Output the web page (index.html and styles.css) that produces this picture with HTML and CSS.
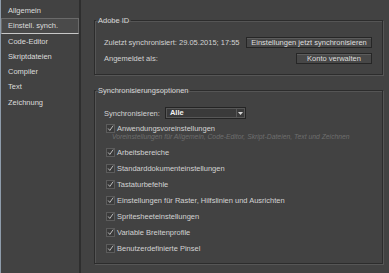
FILE: index.html
```html
<!DOCTYPE html>
<html lang="de">
  <head>
    <meta charset="UTF-8" />
    <title>Voreinstellungen</title>
    <link rel="stylesheet" href="styles.css">
  </head>
  <body>
    <div class="window">
      <div class="sidebar">
        <div class="item">Allgemein</div>
        <div class="item active">Einstell. synch.</div>
        <div class="item">Code-Editor</div>
        <div class="item">Skriptdateien</div>
        <div class="item">Compiler</div>
        <div class="item">Text</div>
        <div class="item">Zeichnung</div>
      </div>
      <div class="divider"></div>

      <div class="contents">
        <fieldset class="group">
          <legend>Adobe ID</legend>
          <div class="id-rows">
            <div class="row">
              <span>Zuletzt synchronisiert: 29.05.2015; 17:55</span>
              <button class="btn wide">Einstellungen jetzt synchronisieren</button>
            </div>
            <div class="row">
              <span>Angemeldet als:</span>
              <button class="btn narrow">Konto verwalten</button>
            </div>
          </div>
        </fieldset>

        <fieldset class="group options">
          <legend>Synchronisierungsoptionen</legend>
          <div class="sync-line">
            <span class="label">Synchronisieren:</span>
            <div class="select">
              <span class="value">Alle</span>
              <span class="arrow">
                <svg width="5" height="3" viewBox="0 0 5 3"><path d="M0 0H5L2.5 3Z" fill="#d8d8d8"/></svg>
              </span>
            </div>
          </div>
          <div class="checks">
            <div class="check">
              <span class="box"><svg width="9" height="9" viewBox="0 0 9 9"><path d="M1.5 4.5L3.6 7L8 0.8" fill="none" stroke="#d0d0d0" stroke-width="1.1"/></svg></span>
              Anwendungsvoreinstellungen
            </div>
            <div class="hint">Voreinstellungen für Allgemein, Code-Editor, Skript-Dateien, Text und Zeichnen</div>
            <div class="check">
              <span class="box"><svg width="9" height="9" viewBox="0 0 9 9"><path d="M1.5 4.5L3.6 7L8 0.8" fill="none" stroke="#d0d0d0" stroke-width="1.1"/></svg></span>
              Arbeitsbereiche
            </div>
            <div class="check">
              <span class="box"><svg width="9" height="9" viewBox="0 0 9 9"><path d="M1.5 4.5L3.6 7L8 0.8" fill="none" stroke="#d0d0d0" stroke-width="1.1"/></svg></span>
              Standarddokumenteinstellungen
            </div>
            <div class="check">
              <span class="box"><svg width="9" height="9" viewBox="0 0 9 9"><path d="M1.5 4.5L3.6 7L8 0.8" fill="none" stroke="#d0d0d0" stroke-width="1.1"/></svg></span>
              Tastaturbefehle
            </div>
            <div class="check">
              <span class="box"><svg width="9" height="9" viewBox="0 0 9 9"><path d="M1.5 4.5L3.6 7L8 0.8" fill="none" stroke="#d0d0d0" stroke-width="1.1"/></svg></span>
              Einstellungen für Raster, Hilfslinien und Ausrichten
            </div>
            <div class="check">
              <span class="box"><svg width="9" height="9" viewBox="0 0 9 9"><path d="M1.5 4.5L3.6 7L8 0.8" fill="none" stroke="#d0d0d0" stroke-width="1.1"/></svg></span>
              Spritesheeteinstellungen
            </div>
            <div class="check">
              <span class="box"><svg width="9" height="9" viewBox="0 0 9 9"><path d="M1.5 4.5L3.6 7L8 0.8" fill="none" stroke="#d0d0d0" stroke-width="1.1"/></svg></span>
              Variable Breitenprofile
            </div>
            <div class="check">
              <span class="box"><svg width="9" height="9" viewBox="0 0 9 9"><path d="M1.5 4.5L3.6 7L8 0.8" fill="none" stroke="#d0d0d0" stroke-width="1.1"/></svg></span>
              Benutzerdefinierte Pinsel
            </div>
          </div>
        </fieldset>
      </div>
    </div>
  </body>
</html>
```

FILE: styles.css
```css
* {
  box-sizing: border-box;
  font-family: "Liberation Sans", Arial, sans-serif;
}
body {
  margin: 0;
  background-color: #424242;
}
.window {
  display: flex;
  height: 273px;
  border-left: 1px solid #8e9cab;
  background-color: #424242;
  color: #d2d2d2;
  font-size: 7.5px;
}
.sidebar {
  width: 78px;
  padding-top: 3px;
}
.item {
  height: 15.3px;
  line-height: 15px;
  padding-left: 7px;
  color: #dcdcdc;
}
.item.active {
  background-color: #4a4a4a;
  border: 1px solid #6a6a6a;
  border-bottom-color: #c8c8c8;
  line-height: 13px;
  padding-left: 6px;
}
.divider {
  width: 2px;
  background-color: #2e2e2e;
}
.contents {
  flex: 1;
  padding: 16px 6px 9px 13px;
  display: flex;
  flex-direction: column;
  row-gap: 11px;
}
.group {
  margin: 0;
  padding: 0;
  border: 1px solid #2c2c2c;
  box-shadow: 1px 1px 0 #565656, inset 1px 1px 0 #555;
  min-width: 0;
}
.group legend {
  margin-left: 1px;
  padding: 0 2px;
  font-size: 7.5px;
  color: #d8d8d8;
}
.id-rows {
  padding: 12px 10px 10px 9px;
  display: flex;
  flex-direction: column;
  row-gap: 5px;
}
.row {
  display: flex;
  justify-content: space-between;
  align-items: center;
}
.btn {
  height: 11px;
  padding: 0;
  background-color: #474747;
  border: 1px solid #262626;
  box-shadow: inset 0 1px 0 #5c5c5c;
  color: #dedede;
  font-size: 7.5px;
  line-height: 9px;
}
.btn.wide {
  width: 126px;
}
.btn.narrow {
  width: 76px;
}
.options {
  flex: 1;
}
.sync-line {
  display: flex;
  align-items: center;
  padding: 12px 0 0 9px;
  column-gap: 5px;
}
.select {
  display: flex;
  width: 81px;
  height: 12px;
  background-color: #3a3a3a;
  border: 1px solid #242424;
  box-shadow: inset 0 0 0 1px #575757;
}
.select .value {
  flex: 1;
  padding-left: 4px;
  line-height: 10px;
  color: #f2f2f2;
  font-weight: bold;
}
.select .arrow {
  width: 9px;
  border-left: 1px solid #575757;
  display: flex;
  align-items: center;
  justify-content: center;
}
.checks {
  padding: 1px 0 0 11px;
}
.check {
  display: flex;
  align-items: center;
  column-gap: 2px;
  height: 16px;
}
.box {
  width: 9px;
  height: 9px;
  background-color: #3a3a3a;
  border: 1px solid #5c5c5c;
  display: flex;
}
.box svg {
  margin: -1px 0 0 0;
}
.hint {
  margin: -3px 0 4px 6px;
  height: 7px;
  line-height: 7px;
  font-size: 6.8px;
  font-style: italic;
  color: #6e6e6e;
}
```
